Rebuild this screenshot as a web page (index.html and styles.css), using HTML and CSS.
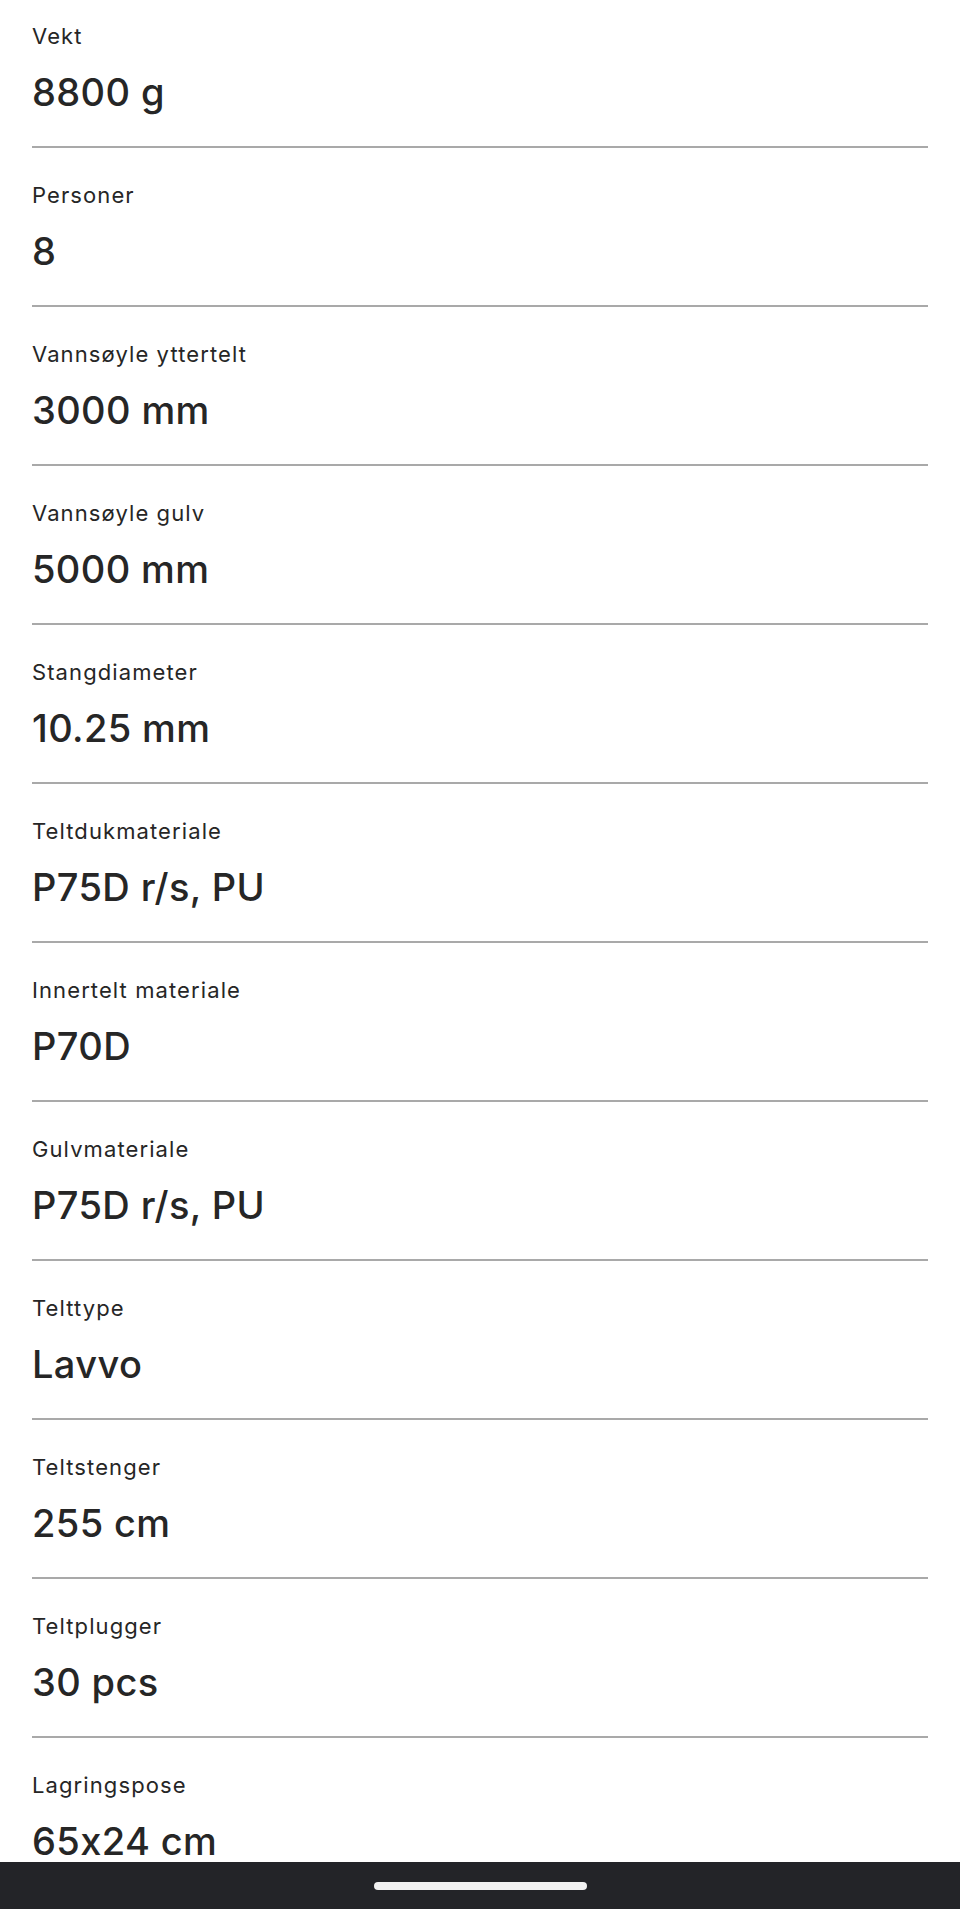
FILE: index.html
```html
<!DOCTYPE html>
<html lang="no">
<head>
  <meta charset="UTF-8">
  <meta name="viewport" content="width=device-width, initial-scale=1.0">
  <title>Spesifikasjoner</title>
  <link rel="stylesheet" href="styles.css">
</head>
<body>
  <dl class="specs">
    <div class="spec">
      <dt>Vekt</dt>
      <dd>8800 g</dd>
    </div>
    <div class="spec">
      <dt>Personer</dt>
      <dd>8</dd>
    </div>
    <div class="spec">
      <dt>Vannsøyle yttertelt</dt>
      <dd>3000 mm</dd>
    </div>
    <div class="spec">
      <dt>Vannsøyle gulv</dt>
      <dd>5000 mm</dd>
    </div>
    <div class="spec">
      <dt>Stangdiameter</dt>
      <dd>10.25 mm</dd>
    </div>
    <div class="spec">
      <dt>Teltdukmateriale</dt>
      <dd>P75D r/s, PU</dd>
    </div>
    <div class="spec">
      <dt>Innertelt materiale</dt>
      <dd>P70D</dd>
    </div>
    <div class="spec">
      <dt>Gulvmateriale</dt>
      <dd>P75D r/s, PU</dd>
    </div>
    <div class="spec">
      <dt>Telttype</dt>
      <dd>Lavvo</dd>
    </div>
    <div class="spec">
      <dt>Teltstenger</dt>
      <dd>255 cm</dd>
    </div>
    <div class="spec">
      <dt>Teltplugger</dt>
      <dd>30 pcs</dd>
    </div>
    <div class="spec">
      <dt>Lagringspose</dt>
      <dd>65x24 cm</dd>
    </div>
  </dl>

  <div class="nav-bar">
    <span class="home-pill"></span>
  </div>
</body>
</html>
```

FILE: styles.css
```css
body {
  margin: 0;
  background: #fff;
  color: #262626;
  font-family: Inter, "Liberation Sans", sans-serif;
  font-feature-settings: "calt" 0;
  overflow: hidden;
}

/* list is scrolled a little, first row starts above the fold */
.specs {
  margin: -11px 32px 0;
  padding: 0;
}

.spec {
  padding: 33px 0 31px;
  border-bottom: 2px solid #a9a9a9;
}

.spec dt {
  font-size: 22px;
  line-height: 28px;
  font-weight: 400;
  letter-spacing: 0.05em;
}

.spec dd {
  margin: 19px 0 0;
  font-size: 38px;
  line-height: 46px;
  font-weight: 500;
  letter-spacing: 0.01em;
}

.nav-bar {
  position: fixed;
  left: 0;
  right: 0;
  bottom: 0;
  height: 47px;
  background: #232428;
  display: flex;
  justify-content: center;
  padding-top: 20px;
  box-sizing: border-box;
}

.home-pill {
  width: 213px;
  height: 8px;
  border-radius: 4px;
  background: #f2f2f2;
}
```
